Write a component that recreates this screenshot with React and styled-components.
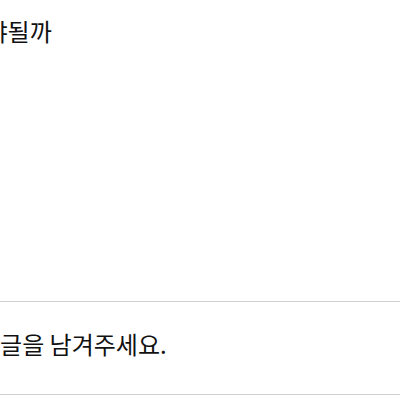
import React from "react";
import styled, { createGlobalStyle } from "styled-components";

const GlobalStyle = createGlobalStyle`
  body {
    margin: 0;
    background: #fff;
    font-family: "Noto Sans CJK KR", "Noto Sans", sans-serif;
    color: #222;
  }
`;

const Page = styled.div`
  width: 400px;
  height: 400px;
  overflow: hidden;
  display: flex;
  flex-direction: column;
`;

const Post = styled.section`
  height: 301px;
  padding-top: 14px;
  box-sizing: border-box;
`;

const Title = styled.h2`
  margin: 0 0 0 ${(p) => p.$shift}px;
  font-size: 24px;
  font-weight: 400;
  line-height: 34px;
  white-space: nowrap;
  color: #111;
`;

const CommentBox = styled.div`
  height: 92px;
  border-top: 1px solid #cfcfcf;
  border-bottom: 1px solid #cfcfcf;
  display: flex;
  align-items: center;
`;

const CommentPrompt = styled.div`
  margin-left: ${(p) => p.$shift}px;
  font-size: 24px;
  line-height: 34px;
  white-space: nowrap;
  color: #111;
  padding-bottom: 8px;
`;

export default function App() {
  return (
    <>
      <GlobalStyle />
      <Page>
        <Post>
          <Title $shift={-64}>뭘 해야될까</Title>
        </Post>
        <CommentBox>
          <CommentPrompt $shift={-22}>댓글을 남겨주세요.</CommentPrompt>
        </CommentBox>
      </Page>
    </>
  );
}
